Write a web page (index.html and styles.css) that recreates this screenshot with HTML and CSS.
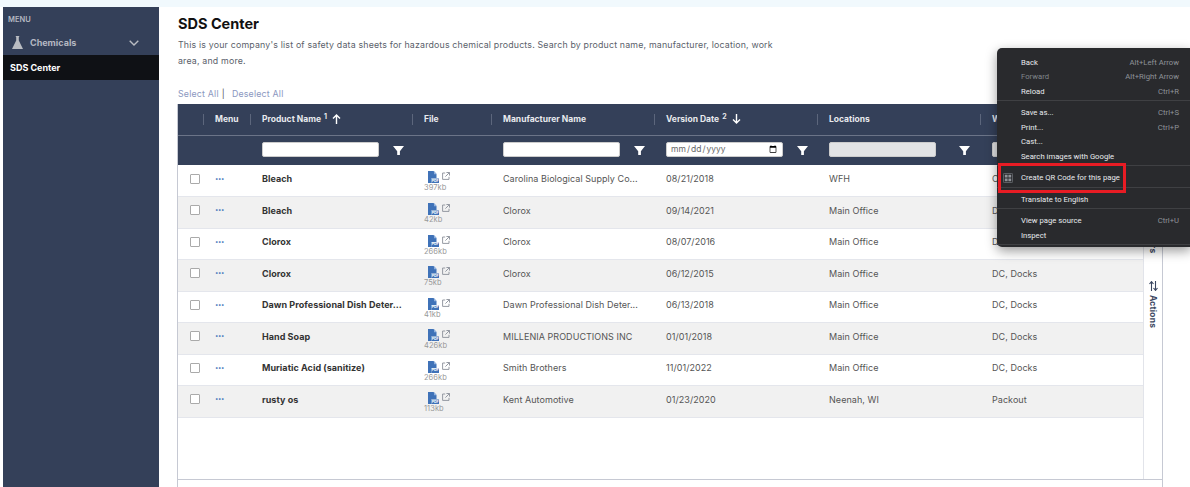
FILE: index.html
```html
<!DOCTYPE html>
<html lang="en">
<head>
    <meta charset="UTF-8">
    <meta name="viewport" content="width=device-width, initial-scale=1.0">
    <title>SDS Center</title>
    <link rel="stylesheet" href="styles.css">
</head>
<body>
    <svg class="icon-defs" width="0" height="0">
        <symbol id="pdf" viewBox="0 0 11 12">
            <path d="M0 0h5.500l3 3.200V7H3.500v5H0z" fill="#3f72b8"/>
            <path d="M6 0l3 3.200H6z" fill="#8fb0dc"/>
            <rect x="3.500" y="7.500" width="7.500" height="4.500" fill="#3f72b8"/>
        </symbol>
        <symbol id="ext" viewBox="0 0 8 8">
            <path d="M3.200 1H.6v6.400H7V4.800M4.400.5h3.100v3.100M7.400.6L3.400 4.600" fill="none" stroke="#8a8f99" stroke-width=".9"/>
        </symbol>
        <symbol id="funnel" viewBox="0 0 11 9">
            <path d="M0 0h11L6.900 5.200V9H4.200V5.200z" fill="#fff"/>
        </symbol>
    </svg>

    <div class="top-strip"></div>
    <div class="app">
        <div class="sidebar">
            <div class="menu-label">MENU</div>
            <div class="nav-group">
                <svg class="flask" width="11" height="13" viewBox="0 0 11 13"><path d="M3.800 0h3.400v1H6.800v3.600L11 13H0l4.200-8.400V1h-.4z" fill="#b9bcc2"/></svg>
                <span>Chemicals</span>
                <svg class="chevron" width="10" height="6" viewBox="0 0 10 6"><path d="M.7.7L5 5l4.300-4.300" fill="none" stroke="#b9bcc2" stroke-width="1.400"/></svg>
            </div>
            <div class="nav-item">SDS Center</div>
        </div>

        <div class="content">
            <h1>SDS Center</h1>
            <p class="intro">This is your company's list of safety data sheets for hazardous chemical products. Search by product name, manufacturer, location, work area, and more.</p>
            <div class="select-links"><a>Select All</a><span class="bar">|</span><a>Deselect All</a></div>

            <div class="grid-frame">
                <div class="grid-body">
                    <div class="grid-main">
                        <table>
                            <colgroup>
                                <col class="c-check"><col class="c-menu"><col class="c-name"><col class="c-file">
                                <col class="c-wide"><col class="c-wide"><col class="c-wide"><col>
                            </colgroup>
                            <thead>
                                <tr class="head-row">
                                    <th></th>
                                    <th><span class="th-in">Menu</span></th>
                                    <th><span class="th-in">Product Name <sup>1</sup><svg class="sort" width="9" height="10" viewBox="0 0 9 10"><path d="M4.500 10V1M1 4.500L4.500 1 8 4.500" fill="none" stroke="#fff" stroke-width="1.400"/></svg></span></th>
                                    <th><span class="th-in">File</span></th>
                                    <th><span class="th-in">Manufacturer Name</span></th>
                                    <th><span class="th-in">Version Date <sup>2</sup><svg class="sort" width="9" height="10" viewBox="0 0 9 10"><path d="M4.500 0v9M1 5.500L4.500 9 8 5.500" fill="none" stroke="#fff" stroke-width="1.400"/></svg></span></th>
                                    <th><span class="th-in">Locations</span></th>
                                    <th><span class="th-in">Work Area</span></th>
                                </tr>
                                <tr class="filter-row">
                                    <th></th>
                                    <th></th>
                                    <th><div class="filter"><input type="text"><svg width="11" height="9"><use href="#funnel"/></svg></div></th>
                                    <th></th>
                                    <th><div class="filter"><input type="text"><svg width="11" height="9"><use href="#funnel"/></svg></div></th>
                                    <th><div class="filter"><input type="date"><svg width="11" height="9"><use href="#funnel"/></svg></div></th>
                                    <th><div class="filter"><input class="off" type="text" disabled><svg width="11" height="9"><use href="#funnel"/></svg></div></th>
                                    <th><div class="filter"><input class="off" type="text" disabled></div></th>
                                </tr>
                            </thead>
                            <tbody>
                                <tr>
                                    <td><span class="check"></span></td><td><span class="dots">&bull;&bull;&bull;</span></td>
                                    <td class="name">Bleach</td>
                                    <td class="file-cell"><div class="file"><div class="file-icons"><div class="pdf-icon"><svg width="11" height="12"><use href="#pdf"/></svg><span class="pdf-tag">PDF</span></div><svg width="8" height="8"><use href="#ext"/></svg></div><span>397kb</span></div></td>
                                    <td>Carolina Biological Supply Co...</td><td>08/21/2018</td><td>WFH</td><td>Office</td>
                                </tr>
                                <tr>
                                    <td><span class="check"></span></td><td><span class="dots">&bull;&bull;&bull;</span></td>
                                    <td class="name">Bleach</td>
                                    <td class="file-cell"><div class="file"><div class="file-icons"><div class="pdf-icon"><svg width="11" height="12"><use href="#pdf"/></svg><span class="pdf-tag">PDF</span></div><svg width="8" height="8"><use href="#ext"/></svg></div><span>42kb</span></div></td>
                                    <td>Clorox</td><td>09/14/2021</td><td>Main Office</td><td>DC, Docks</td>
                                </tr>
                                <tr>
                                    <td><span class="check"></span></td><td><span class="dots">&bull;&bull;&bull;</span></td>
                                    <td class="name">Clorox</td>
                                    <td class="file-cell"><div class="file"><div class="file-icons"><div class="pdf-icon"><svg width="11" height="12"><use href="#pdf"/></svg><span class="pdf-tag">PDF</span></div><svg width="8" height="8"><use href="#ext"/></svg></div><span>266kb</span></div></td>
                                    <td>Clorox</td><td>08/07/2016</td><td>Main Office</td><td>DC, Docks</td>
                                </tr>
                                <tr>
                                    <td><span class="check"></span></td><td><span class="dots">&bull;&bull;&bull;</span></td>
                                    <td class="name">Clorox</td>
                                    <td class="file-cell"><div class="file"><div class="file-icons"><div class="pdf-icon"><svg width="11" height="12"><use href="#pdf"/></svg><span class="pdf-tag">PDF</span></div><svg width="8" height="8"><use href="#ext"/></svg></div><span>75kb</span></div></td>
                                    <td>Clorox</td><td>06/12/2015</td><td>Main Office</td><td>DC, Docks</td>
                                </tr>
                                <tr>
                                    <td><span class="check"></span></td><td><span class="dots">&bull;&bull;&bull;</span></td>
                                    <td class="name">Dawn Professional Dish Deter...</td>
                                    <td class="file-cell"><div class="file"><div class="file-icons"><div class="pdf-icon"><svg width="11" height="12"><use href="#pdf"/></svg><span class="pdf-tag">PDF</span></div><svg width="8" height="8"><use href="#ext"/></svg></div><span>41kb</span></div></td>
                                    <td>Dawn Professional Dish Deter...</td><td>06/13/2018</td><td>Main Office</td><td>DC, Docks</td>
                                </tr>
                                <tr>
                                    <td><span class="check"></span></td><td><span class="dots">&bull;&bull;&bull;</span></td>
                                    <td class="name">Hand Soap</td>
                                    <td class="file-cell"><div class="file"><div class="file-icons"><div class="pdf-icon"><svg width="11" height="12"><use href="#pdf"/></svg><span class="pdf-tag">PDF</span></div><svg width="8" height="8"><use href="#ext"/></svg></div><span>426kb</span></div></td>
                                    <td>MILLENIA PRODUCTIONS INC</td><td>01/01/2018</td><td>Main Office</td><td>DC, Docks</td>
                                </tr>
                                <tr>
                                    <td><span class="check"></span></td><td><span class="dots">&bull;&bull;&bull;</span></td>
                                    <td class="name">Muriatic Acid (sanitize)</td>
                                    <td class="file-cell"><div class="file"><div class="file-icons"><div class="pdf-icon"><svg width="11" height="12"><use href="#pdf"/></svg><span class="pdf-tag">PDF</span></div><svg width="8" height="8"><use href="#ext"/></svg></div><span>266kb</span></div></td>
                                    <td>Smith Brothers</td><td>11/01/2022</td><td>Main Office</td><td>DC, Docks</td>
                                </tr>
                                <tr>
                                    <td><span class="check"></span></td><td><span class="dots">&bull;&bull;&bull;</span></td>
                                    <td class="name">rusty os</td>
                                    <td class="file-cell"><div class="file"><div class="file-icons"><div class="pdf-icon"><svg width="11" height="12"><use href="#pdf"/></svg><span class="pdf-tag">PDF</span></div><svg width="8" height="8"><use href="#ext"/></svg></div><span>113kb</span></div></td>
                                    <td>Kent Automotive</td><td>01/23/2020</td><td>Neenah, WI</td><td>Packout</td>
                                </tr>
                            </tbody>
                        </table>
                    </div>
                    <div class="side-tabs">
                        <span class="side-tab">Filters</span>
                        <span class="side-tab"><svg width="9" height="10" viewBox="0 0 9 10"><path d="M2.500 10V1M.5 3l2-2.400L4.500 3M6.500 0v9M4.500 7l2 2.400L8.500 7" fill="none" stroke="#3a4660" stroke-width="1.100"/></svg>Actions</span>
                    </div>
                </div>
            </div>
        </div>
    </div>

    <div class="context-menu">
        <div class="menu-group">
            <div class="menu-row"><span>Back</span><span class="keys">Alt+Left Arrow</span></div>
            <div class="menu-row dim"><span>Forward</span><span class="keys">Alt+Right Arrow</span></div>
            <div class="menu-row"><span>Reload</span><span class="keys">Ctrl+R</span></div>
        </div>
        <div class="menu-group">
            <div class="menu-row"><span>Save as...</span><span class="keys">Ctrl+S</span></div>
            <div class="menu-row"><span>Print...</span><span class="keys">Ctrl+P</span></div>
            <div class="menu-row"><span>Cast...</span></div>
            <div class="menu-row"><span>Search images with Google</span></div>
        </div>
        <div class="menu-group">
            <div class="menu-row">
                <svg class="qr-icon" width="10" height="10" viewBox="0 0 10 10"><rect x=".4" y=".4" width="9.200" height="9.200" rx="1" fill="none" stroke="#7d8186" stroke-width=".7"/><path d="M1.800 1.800h2.800v2.800H1.800zM5.400 1.800h2.800v2.800H5.400zM1.800 5.400h2.800v2.800H1.800zM5.400 5.400h2.800v2.800H5.400z" fill="#8f9399"/></svg>
                <span>Create QR Code for this page</span>
            </div>
        </div>
        <div class="menu-group">
            <div class="menu-row"><span>Translate to English</span></div>
        </div>
        <div class="menu-group">
            <div class="menu-row"><span>View page source</span><span class="keys">Ctrl+U</span></div>
            <div class="menu-row"><span>Inspect</span></div>
        </div>
        <div class="red-box"></div>
    </div>
</body>
</html>
```

FILE: styles.css
```css
* {
    margin: 0;
    padding: 0;
    box-sizing: border-box;
}

html,
body {
    height: 100%;
    overflow: hidden;
}

body {
    background-color: #fff;
    font-family: "Inter", "Liberation Sans", sans-serif;
    font-size: 9px;
    color: #555;
    display: flex;
    flex-direction: column;
}

.icon-defs {
    position: absolute;
}

.top-strip {
    height: 7px;
    background-color: #f1f9fd;
}

.app {
    flex: 1;
    display: flex;
    min-height: 0;
    padding-left: 3px;
    background-color: #fff;
}

/* sidebar */
.sidebar {
    width: 156px;
    background-color: #344059;
}

.menu-label {
    padding: 8px 0 0 5px;
    height: 23px;
    line-height: 10px;
    font-size: 7.500px;
    font-weight: 600;
    color: #b4b8c2;
}

.nav-group {
    height: 25px;
    display: flex;
    align-items: center;
    padding: 0 20px 0 9px;
    color: #b4b8c2;
    font-weight: 700;
}

.nav-group span {
    margin-left: 7px;
    flex-grow: 1;
}

.nav-item {
    height: 25px;
    background-color: #0f1115;
    color: #fff;
    font-weight: 700;
    display: flex;
    align-items: center;
    padding-left: 7px;
}

/* main area */
.content {
    flex: 1;
    min-width: 0;
    display: flex;
    flex-direction: column;
    padding: 7px 27px 0 18px;
}

h1 {
    margin-left: 1px;
    font-size: 14.500px;
    font-weight: 700;
    color: #111;
    line-height: 19px;
}

.intro {
    margin: 4px 0 0 1px;
    width: 600px;
    line-height: 16px;
    font-size: 8.800px;
    letter-spacing: 0.18px;
    color: #5b5f6b;
}

.select-links {
    margin: 19px 0 0 1px;
    height: 16px;
    font-size: 8.800px;
    letter-spacing: 0.2px;
    color: #8b97c0;
}

.bar {
    margin: 0 7px 0 3px;
    color: #555;
}

.grid-frame {
    flex: 1;
    min-height: 0;
    border-left: 1px solid #c6c9d3;
    border-right: 1px solid #c6c9d3;
}

.grid-body {
    display: flex;
    height: 376px;
    border-bottom: 1px solid #c6c9d3;
}

.grid-main {
    flex: 1;
    min-width: 0;
    overflow: hidden;
}

.side-tabs {
    width: 19px;
    border-left: 1px solid #e2e4ea;
    display: flex;
    flex-direction: column;
    align-items: center;
    padding-top: 122px;
    gap: 28px;
}

.side-tab {
    writing-mode: vertical-rl;
    display: flex;
    align-items: center;
    gap: 4px;
    font-size: 8.500px;
    font-weight: 700;
    letter-spacing: 0.2px;
    color: #3a4660;
}

.side-tab svg {
    writing-mode: horizontal-tb;
}

/* table */
table {
    width: 965px;
    table-layout: fixed;
    border-collapse: collapse;
}

.c-check { width: 25px; }
.c-menu { width: 47px; }
.c-name { width: 162px; }
.c-file { width: 79px; }
.c-wide { width: 163px; }

thead th {
    background-color: #344059;
    color: #e8eaee;
    text-align: left;
    font-weight: 700;
    font-size: 8.500px;
}

.head-row {
    height: 31px;
    border-bottom: 1px solid #6b7488;
}

.th-in {
    display: flex;
    align-items: center;
    height: 11px;
    padding-left: 11px;
    border-left: 1px solid #5c667c;
    white-space: pre;
}

sup {
    font-size: 7px;
    line-height: 0;
    margin: -5px 0 0 1px;
}

.sort {
    margin-left: 5px;
}

.filter-row {
    height: 30px;
}

.filter {
    display: flex;
    align-items: center;
    padding-left: 12px;
    gap: 14px;
}

.filter input {
    width: 117px;
    height: 15px;
    margin-bottom: 2px;
    border: 1px solid #ccc;
    border-radius: 2px;
    background-color: #fff;
    font-family: inherit;
    font-size: 8.500px;
    color: #666;
    padding: 0 3px;
}

.filter input.off {
    width: 107px;
    background-color: #e2e3e5;
    margin-right: 9px;
}

tbody tr {
    height: 31.500px;
    border-bottom: 1px solid #e4e6ec;
}

tbody tr:nth-child(even) {
    background-color: #f1f1f1;
}

td {
    padding: 0 0 4px 12px;
    font-size: 9px;
    letter-spacing: 0.05px;
    white-space: nowrap;
    overflow: hidden;
}

td.name {
    font-weight: 700;
    color: #333;
}

td.file-cell {
    padding: 6px 0 0 12px;
    vertical-align: top;
}

.check {
    display: block;
    width: 10px;
    height: 10px;
    border: 1px solid #aaa;
    border-radius: 1px;
    background-color: #fff;
}

.dots {
    display: block;
    line-height: 10px;
    font-size: 6px;
    letter-spacing: -0.4px;
    color: #3f72b8;
}

.file {
    display: flex;
    flex-direction: column;
    gap: 1px;
    font-size: 7.500px;
    color: #999;
    line-height: 8px;
}

.file-icons {
    display: flex;
    align-items: flex-start;
    gap: 3px;
    padding-left: 4px;
}

.file-icons > svg {
    margin-top: 1px;
}

.pdf-icon {
    position: relative;
    height: 12px;
}

.pdf-tag {
    position: absolute;
    right: 0;
    bottom: 0;
    width: 7.500px;
    text-align: center;
    font-size: 3.500px;
    line-height: 4.500px;
    font-weight: 700;
    letter-spacing: 0;
    color: #fff;
}

/* context menu over the page */
.context-menu {
    position: absolute;
    left: 997px;
    top: 48px;
    width: 194px;
    height: 199px;
    padding-top: 7px;
    background-color: #292a2d;
    border-radius: 5px 0 0 5px;
    box-shadow: 0 4px 12px rgba(0, 0, 0, 0.4);
    font-family: "Roboto", sans-serif;
    font-size: 7.700px;
    color: #e8eaed;
}

.menu-group {
    padding-bottom: 1.500px;
    margin-bottom: 4.500px;
    border-bottom: 1px solid #3f4043;
}

.menu-group:last-of-type {
    border-bottom: none;
    margin-bottom: 0;
}

.menu-row {
    position: relative;
    height: 14.500px;
    padding: 0 12px 0 24px;
    display: flex;
    align-items: center;
    justify-content: space-between;
}

.menu-row.dim span:first-child {
    color: #80868b;
}

.keys {
    color: #8f9399;
}

.qr-icon {
    position: absolute;
    left: 6px;
    top: 2px;
}

.red-box {
    position: absolute;
    left: 1px;
    top: 115px;
    width: 128px;
    height: 29.500px;
    border: 3px solid #e81c24;
}
```
